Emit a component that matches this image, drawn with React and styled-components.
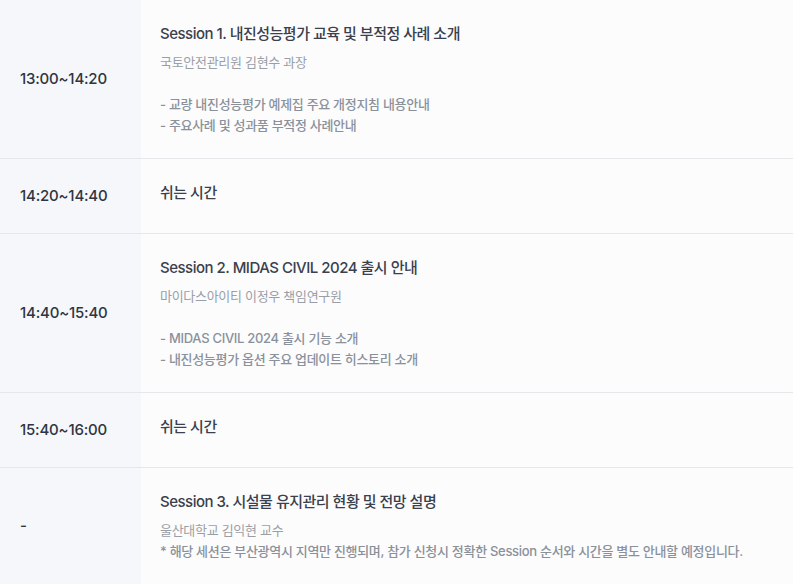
import React from "react";
import styled, { createGlobalStyle } from "styled-components";

//* Data
const rows = [
  {
    time: "13:00~14:20",
    title: "Session 1. 내진성능평가 교육 및 부적정 사례 소개",
    speaker: "국토안전관리원 김현수 과장",
    items: [
      "- 교량 내진성능평가 예제집 주요 개정지침 내용안내",
      "- 주요사례 및 성과품 부적정 사례안내",
    ],
  },
  { time: "14:20~14:40", title: "쉬는 시간" },
  {
    time: "14:40~15:40",
    title: "Session 2. MIDAS CIVIL 2024 출시 안내",
    speaker: "마이다스아이티 이정우 책임연구원",
    items: [
      "- MIDAS CIVIL 2024 출시 기능 소개",
      "- 내진성능평가 옵션 주요 업데이트 히스토리 소개",
    ],
  },
  { time: "15:40~16:00", title: "쉬는 시간" },
  {
    time: "-",
    title: "Session 3. 시설물 유지관리 현황 및 전망 설명",
    speaker: "울산대학교 김익현 교수",
    note:
      "* 해당 세션은 부산광역시 지역만 진행되며, 참가 신청시 정확한 Session 순서와 시간을 별도 안내할 예정입니다.",
  },
];

//* Style
const GlobalStyle = createGlobalStyle`
  body {
    margin: 0;
    background: #fcfcfd;
    font-family: Inter, "Noto Sans CJK KR", sans-serif;
  }
`;

const Table = styled.div`
  width: 793px;
`;

const Row = styled.div`
  display: grid;
  grid-template-columns: 141px 1fr;
  border-bottom: 1px solid #e6e7ea;
  &:last-child {
    border-bottom: none;
  }
`;

const Time = styled.div`
  display: flex;
  align-items: center;
  padding: 25px 20px;
  background: #f5f7fb;
  font-size: 15px;
  line-height: 24px;
  font-weight: 500;
  color: #2f3540;
  letter-spacing: -0.2px;
`;

const Content = styled.div`
  padding: 22px 19px 22px;
  background: #fcfcfd;
`;

const Title = styled.div`
  font-size: 15px;
  line-height: 24px;
  font-weight: 500;
  color: #3a404c;
  letter-spacing: -0.5px;
`;

const Speaker = styled.div`
  margin-top: 6px;
  font-size: 13px;
  line-height: 21px;
  color: #9a9fa7;
  letter-spacing: -0.3px;
`;

const List = styled.div`
  margin-top: 21px;
`;

const Line = styled.div`
  font-size: 13px;
  line-height: 21px;
  font-weight: 500;
  color: #8a919b;
  letter-spacing: -0.3px;
`;

//* JSX
function App() {
  return (
    <>
      <GlobalStyle />
      <Table>
        {rows.map(({ time, title, speaker, items, note }) => (
          <Row key={time + title}>
            <Time>{time}</Time>
            <Content>
              <Title>{title}</Title>
              {speaker && <Speaker>{speaker}</Speaker>}
              {items && (
                <List>
                  {items.map((item) => (
                    <Line key={item}>{item}</Line>
                  ))}
                </List>
              )}
              {note && <Line>{note}</Line>}
            </Content>
          </Row>
        ))}
      </Table>
    </>
  );
}

export default App;
